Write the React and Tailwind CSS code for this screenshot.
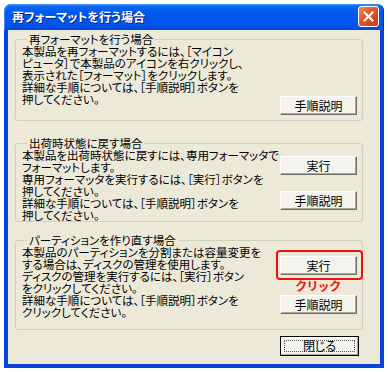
const FONT = "font-['Noto_Sans_CJK_JP','Noto_Sans',sans-serif] [font-feature-settings:'palt']";

const XpButton = ({ label, isDefault }) => {
    if (isDefault) {
        return (
            <div className="w-[79px] h-[20px] border border-black bg-[#F4F3EE]">
                <div className="w-full h-full border border-t-white border-l-white border-r-[#ACA899] border-b-[#ACA899] p-[2px]">
                    <div className="w-full h-full border border-dotted border-[#555] flex items-center justify-center text-[12px] leading-none text-black">{label}</div>
                </div>
            </div>
        );
    }
    return (
        <div className="w-[77px] h-[19px] bg-[#F4F3EE] border border-t-white border-l-white border-r-[#716F64] border-b-[#716F64] shadow-[inset_-1px_-1px_0_#ACA899] flex items-center justify-center text-[12px] leading-none text-black">
            {label}
        </div>
    );
}

const GroupBox = ({ title, lines, className, children }) => {
    return (
        <fieldset className={`border border-[#D0D0BF] rounded-[3px] pl-[6px] pr-[5px] ${className}`}>
            <legend className="ml-[5px] px-[2px] text-[11.5px] leading-[12px] text-black">{title}</legend>
            <div className="flex">
                <div className="flex-1 min-w-0 text-[11.5px] leading-[12px] text-black whitespace-nowrap">
                    {lines.map((l, i) => <div key={i}>{l}</div>)}
                </div>
                <div className="w-[77px] flex flex-col items-center">
                    {children}
                </div>
            </div>
        </fieldset>
    );
}

export default function App() {
    return (
        <div className={`w-[388px] h-[372px] bg-white pt-[4px] pl-[4px] ${FONT}`}>
            <div className="w-[380px] h-[364px] flex flex-col">
                {/* title bar */}
                <div className="h-[26px] rounded-t-[7px] bg-[linear-gradient(to_bottom,#3D95FF_0%,#0A66F4_10%,#0058EE_35%,#0055EA_80%,#0047D6_100%)] flex items-center pl-[8px] pr-[5px] shadow-[inset_1px_1px_0_#3C8CF5,inset_-1px_0_0_#0030B8]">
                    <div className="flex-1 text-white font-bold text-[12px] leading-none [text-shadow:1px_1px_0_#0A1E8A]">再フォーマットを行う場合</div>
                    <div className="w-[21px] h-[21px] rounded-[3px] border border-white bg-[linear-gradient(135deg,#EE8B6C_0%,#E2582F_40%,#C93C14_100%)] flex items-center justify-center mb-[1px]">
                        <svg width="11" height="11" viewBox="0 0 11 11">
                            <path d="M1.5 1.5 L9.5 9.5 M9.5 1.5 L1.5 9.5" stroke="white" strokeWidth="2.2" strokeLinecap="square" />
                        </svg>
                    </div>
                </div>
                {/* client */}
                <div className="flex-1 bg-[#ECE9D8] border-x-[4px] border-b-[4px] border-[#0843DA] pl-[7px] pr-[17px] pt-[3px] flex flex-col">
                    <GroupBox
                        title="再フォーマットを行う場合"
                        lines={[
                            "本製品を再フォーマットするには、［マイコン",
                            "ピュータ］で本製品のアイコンを右クリックし、",
                            "表示された［フォーマット］をクリックします。",
                            "詳細な手順については、［手順説明］ボタンを",
                            "押してください。",
                        ]}
                    >
                        <div className="mt-[51px] mb-[5px]"><XpButton label="手順説明" /></div>
                    </GroupBox>

                    <GroupBox
                        className="mt-[16px]"
                        title="出荷時状態に戻す場合"
                        lines={[
                            "本製品を出荷時状態に戻すには、専用フォーマッタで",
                            "フォーマットします。",
                            "専用フォーマッタを実行するには、［実行］ボタンを",
                            "押してください。",
                            "詳細な手順については、［手順説明］ボタンを",
                            "押してください。",
                        ]}
                    >
                        <div className="mt-[7px]"><XpButton label="実行" /></div>
                        <div className="mt-[16px] mb-[1px]"><XpButton label="手順説明" /></div>
                    </GroupBox>

                    <GroupBox
                        className="mt-[12px]"
                        title="パーティションを作り直す場合"
                        lines={[
                            "本製品のパーティションを分割または容量変更を",
                            "する場合は、ディスクの管理を使用します。",
                            "ディスクの管理を実行するには、［実行］ボタン",
                            "をクリックしてください。",
                            "詳細な手順については、［手順説明］ボタンを",
                            "クリックしてください。",
                        ]}
                    >
                        <div className="relative mt-[10px]">
                            <XpButton label="実行" />
                            <div className="absolute left-[-4px] right-[-6px] top-[-6px] bottom-[-5px] border-2 border-[#F01010] rounded-[4px]"></div>
                        </div>
                        <div className="mt-[5px] text-[12px] leading-[12px] font-bold text-[#F01010] tracking-[1px]">クリック</div>
                        <div className="mt-[3px] mb-[15px]"><XpButton label="手順説明" /></div>
                    </GroupBox>

                    <div className="flex justify-end mt-[6px] pr-[4px]">
                        <XpButton label="閉じる" isDefault />
                    </div>
                </div>
            </div>
        </div>
    );
}
